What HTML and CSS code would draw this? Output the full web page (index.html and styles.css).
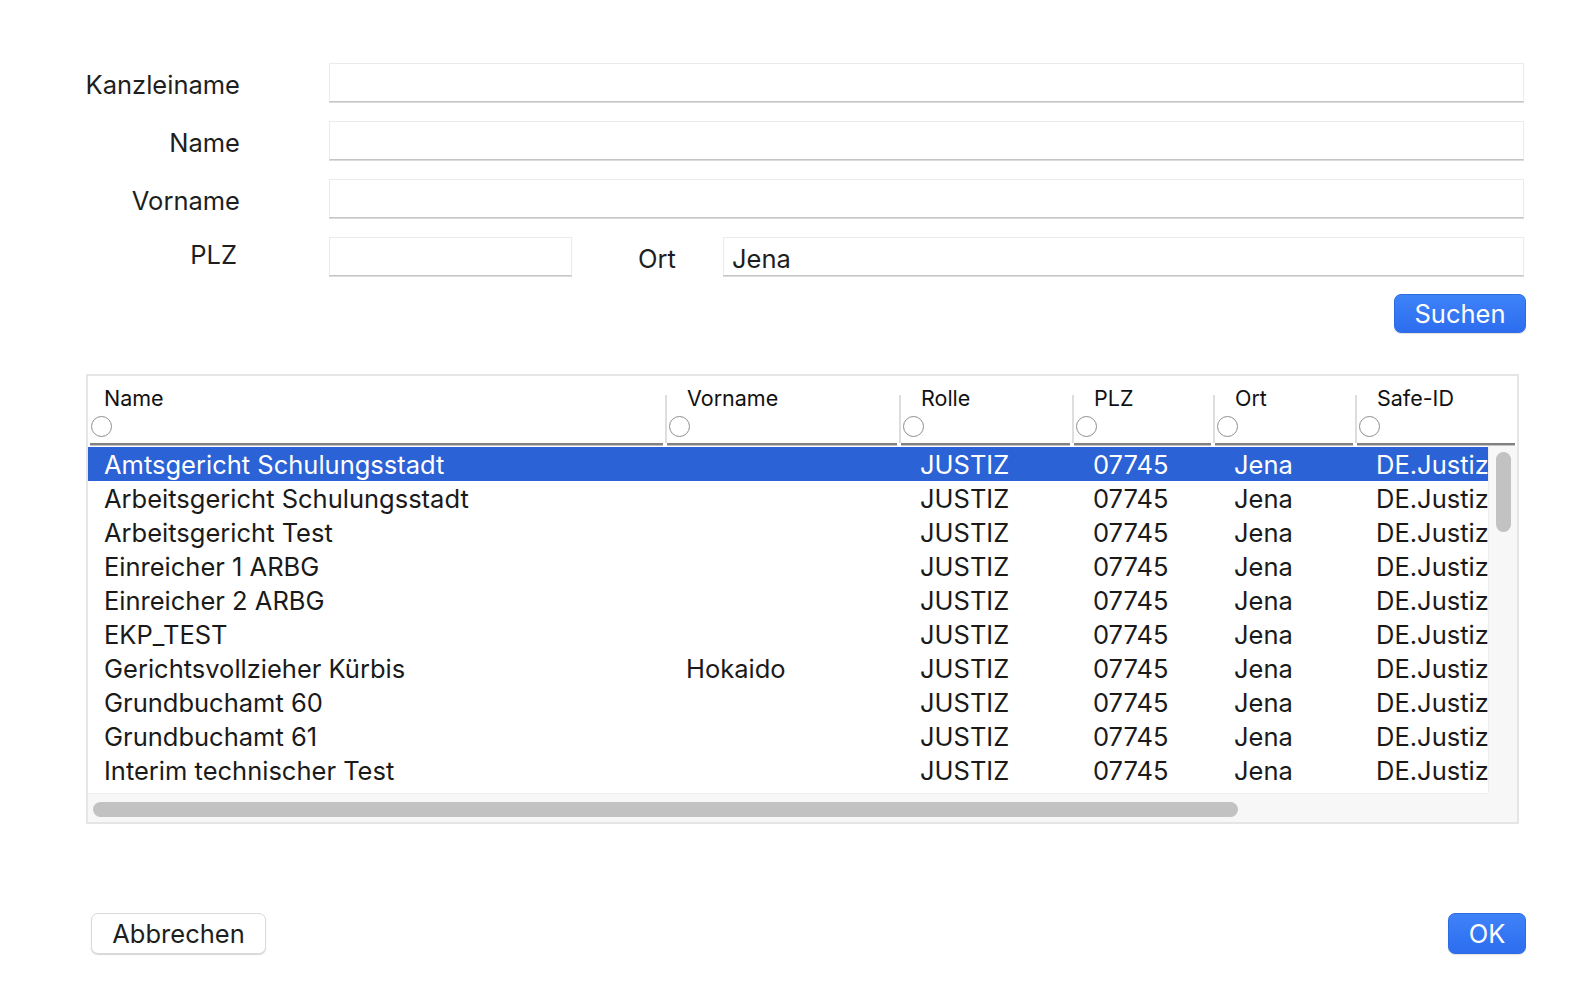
FILE: index.html
```html
<!DOCTYPE html>
<html lang="de">
<head>
<meta charset="utf-8">
<title>Suche</title>
<link rel="stylesheet" href="styles.css">
</head>
<body>
<div class="dialog">
  <div class="form">
    <div class="lbl">Kanzleiname</div><div class="field"></div>
    <div class="lbl">Name</div><div class="field"></div>
    <div class="lbl">Vorname</div><div class="field"></div>
    <div class="lbl lbl-plz">PLZ</div>
    <div class="plz-row">
      <div class="field field-plz"></div>
      <div class="ort-lbl">Ort</div>
      <div class="field field-ort">Jena</div>
    </div>
  </div>
  <div class="search-row"><button class="btn primary btn-search">Suchen</button></div>

  <div class="table">
    <div class="thead">
      <div class="hcell c1"><div class="hbody"><div class="hcontent first"><div class="htext">Name</div><div class="radio"></div></div></div><div class="hline"></div></div>
      <div class="hcell c2"><div class="hbody"><div class="sep"></div><div class="hcontent"><div class="htext">Vorname</div><div class="radio"></div></div></div><div class="hline"></div></div>
      <div class="hcell c3"><div class="hbody"><div class="sep"></div><div class="hcontent"><div class="htext">Rolle</div><div class="radio"></div></div></div><div class="hline"></div></div>
      <div class="hcell c4"><div class="hbody"><div class="sep"></div><div class="hcontent"><div class="htext">PLZ</div><div class="radio"></div></div></div><div class="hline"></div></div>
      <div class="hcell c5"><div class="hbody"><div class="sep"></div><div class="hcontent"><div class="htext">Ort</div><div class="radio"></div></div></div><div class="hline"></div></div>
      <div class="hcell c6"><div class="hbody"><div class="sep"></div><div class="hcontent"><div class="htext">Safe-ID</div><div class="radio"></div></div></div><div class="hline"></div></div>
    </div>
    <div class="tbody">
      <div class="viewport">
        <div class="row selected"><div class="cell c1">Amtsgericht Schulungsstadt</div><div class="cell c2"></div><div class="cell c3">JUSTIZ</div><div class="cell c4">07745</div><div class="cell c5">Jena</div><div class="cell c6">DE.Justiz</div></div>
        <div class="row"><div class="cell c1">Arbeitsgericht Schulungsstadt</div><div class="cell c2"></div><div class="cell c3">JUSTIZ</div><div class="cell c4">07745</div><div class="cell c5">Jena</div><div class="cell c6">DE.Justiz</div></div>
        <div class="row"><div class="cell c1">Arbeitsgericht Test</div><div class="cell c2"></div><div class="cell c3">JUSTIZ</div><div class="cell c4">07745</div><div class="cell c5">Jena</div><div class="cell c6">DE.Justiz</div></div>
        <div class="row"><div class="cell c1">Einreicher 1 ARBG</div><div class="cell c2"></div><div class="cell c3">JUSTIZ</div><div class="cell c4">07745</div><div class="cell c5">Jena</div><div class="cell c6">DE.Justiz</div></div>
        <div class="row"><div class="cell c1">Einreicher 2 ARBG</div><div class="cell c2"></div><div class="cell c3">JUSTIZ</div><div class="cell c4">07745</div><div class="cell c5">Jena</div><div class="cell c6">DE.Justiz</div></div>
        <div class="row"><div class="cell c1">EKP_TEST</div><div class="cell c2"></div><div class="cell c3">JUSTIZ</div><div class="cell c4">07745</div><div class="cell c5">Jena</div><div class="cell c6">DE.Justiz</div></div>
        <div class="row"><div class="cell c1">Gerichtsvollzieher Kürbis</div><div class="cell c2">Hokaido</div><div class="cell c3">JUSTIZ</div><div class="cell c4">07745</div><div class="cell c5">Jena</div><div class="cell c6">DE.Justiz</div></div>
        <div class="row"><div class="cell c1">Grundbuchamt 60</div><div class="cell c2"></div><div class="cell c3">JUSTIZ</div><div class="cell c4">07745</div><div class="cell c5">Jena</div><div class="cell c6">DE.Justiz</div></div>
        <div class="row"><div class="cell c1">Grundbuchamt 61</div><div class="cell c2"></div><div class="cell c3">JUSTIZ</div><div class="cell c4">07745</div><div class="cell c5">Jena</div><div class="cell c6">DE.Justiz</div></div>
        <div class="row"><div class="cell c1">Interim technischer Test</div><div class="cell c2"></div><div class="cell c3">JUSTIZ</div><div class="cell c4">07745</div><div class="cell c5">Jena</div><div class="cell c6">DE.Justiz</div></div>
      </div>
      <div class="vscroll"><div class="vthumb"></div></div>
      <div class="hscroll"><div class="hthumb"></div></div>
      <div class="corner"></div>
    </div>
  </div>

  <div class="footer">
    <button class="btn btn-cancel">Abbrechen</button>
    <button class="btn primary btn-ok">OK</button>
  </div>
</div>
</body>
</html>
```

FILE: styles.css
```css
* { box-sizing: border-box; }

html, body {
  margin: 0;
  padding: 0;
  background: #ffffff;
}

body {
  font-family: "Inter", "Liberation Sans", sans-serif;
  color: #1f1f1f;
  width: 1592px;
  height: 990px;
  overflow: hidden;
}

.dialog {
  padding-top: 63px;
}

/* ---------- form ---------- */
.form {
  display: grid;
  grid-template-columns: 240px 1fr;
  column-gap: 89px;
  row-gap: 19px;
  grid-auto-rows: 39px;
  margin-right: 68px;
}

.lbl {
  font-size: 25.5px;
  text-align: right;
  align-self: center;
  padding-top: 4px;
  color: #1e1e1e;
}

.lbl-plz {
  padding-top: 0;
  padding-bottom: 4px;
  padding-right: 3px;
}

.field {
  background: #fff;
  border: 1px solid #ebebeb;
  border-bottom: 1px solid #c4c4c4;
  box-shadow: 0 1px 0 #dcdcdc;
  height: 39px;
  font-size: 25.5px;
  line-height: 37px;
  padding-left: 8px;
  color: #1e1e1e;
}

.plz-row {
  display: flex;
  align-items: center;
}

.field-plz {
  width: 243px;
  flex: none;
}

.ort-lbl {
  font-size: 25.5px;
  margin-left: 66px;
  width: 85px;
  padding-top: 4px;
  color: #1e1e1e;
}

.field-ort {
  flex: 1;
  padding-top: 2px;
}

/* ---------- buttons ---------- */
.search-row {
  display: flex;
  justify-content: flex-end;
  padding-right: 66px;
  margin-top: 18px;
}

.btn {
  font-family: "Inter", "Liberation Sans", sans-serif;
  font-size: 25.5px;
  border-radius: 7px;
  cursor: default;
  padding: 0;
}

.primary {
  background: linear-gradient(#3e82f8, #2d6def);
  color: #fff;
  border: 1px solid #2e6be3;
  box-shadow: 0 1px 1px rgba(0, 0, 0, 0.12);
}

.btn-search {
  width: 132px;
  height: 39px;
}

.btn-cancel {
  width: 175px;
  height: 41px;
  background: #fff;
  color: #1e1e1e;
  border: 1px solid #dadada;
  box-shadow: 0 1px 1px rgba(0, 0, 0, 0.16);
}

.btn-ok {
  width: 78px;
  height: 41px;
}

/* ---------- table ---------- */
.table {
  margin-top: 41px;
  margin-left: 86px;
  width: 1433px;
  height: 450px;
  border: 2px solid #e5e5e5;
  overflow: hidden;
}

.thead {
  display: flex;
  height: 70px;
  background: #fff;
}

.hcell {
  display: flex;
  flex-direction: column;
  flex: none;
}

.c1 { width: 577px; }
.c2 { width: 234px; }
.c3 { width: 173px; }
.c4 { width: 141px; }
.c5 { width: 142px; }
.c6 { width: 162px; }

.hbody {
  display: flex;
  flex: 1;
}

.sep {
  width: 2px;
  margin-top: 19px;
  background: #dedede;
  flex: none;
}

.hcontent {
  flex: 1;
  padding-top: 10px;
  padding-left: 2px;
}

.hcontent.first {
  padding-left: 3px;
}

.htext {
  font-size: 21.5px;
  line-height: 24px;
  padding-left: 18px;
  color: #111;
}

.first .htext {
  padding-left: 13px;
}

.radio {
  width: 21px;
  height: 21px;
  border: 1px solid #8e8e8e;
  border-radius: 50%;
  margin-top: 6px;
  background: #fff;
}

.hline {
  height: 3px;
  margin: 0 2px;
  border-top: 2px solid #808080;
  background: #c4c4c4;
}

.tbody {
  display: grid;
  grid-template-columns: 1400px 29px;
  grid-template-rows: 347px 29px;
}

.viewport {
  overflow: hidden;
  background: #fff;
  padding-top: 1px;
}

.row {
  display: flex;
  height: 34px;
  width: 1437px;
  font-size: 25.5px;
  line-height: 32px;
  color: #1a1a1a;
}

.row.selected {
  background: #2b62d5;
  color: #fff;
}

.cell {
  flex: none;
  padding-left: 21px;
  padding-top: 2px;
  white-space: nowrap;
  overflow: hidden;
}

.cell.c1 { padding-left: 16px; }
.cell.c6 { width: 170px; }

.vscroll {
  background: #f7f7f7;
  border-left: 1px solid #ededed;
  padding-top: 6px;
  padding-left: 7px;
}

.vthumb {
  width: 15px;
  height: 80px;
  border-radius: 8px;
  background: #c2c2c2;
}

.hscroll {
  background: #f7f7f7;
  border-top: 1px solid #ededed;
  padding-top: 8px;
  padding-left: 5px;
}

.hthumb {
  width: 1145px;
  height: 15px;
  border-radius: 8px;
  background: #c2c2c2;
}

.corner {
  background: #f7f7f7;
}

/* ---------- footer ---------- */
.footer {
  display: flex;
  justify-content: space-between;
  align-items: center;
  margin-top: 89px;
  padding-left: 91px;
  padding-right: 66px;
}
```
